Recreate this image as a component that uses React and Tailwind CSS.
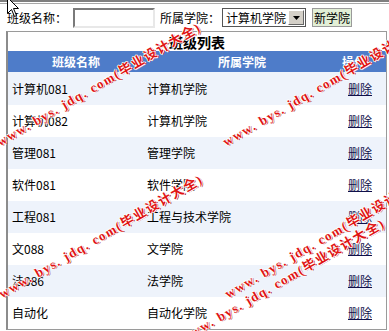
import React from 'react'

const rows = [
  { name: '计算机081', college: '计算机学院' },
  { name: '计算机082', college: '计算机学院' },
  { name: '管理081', college: '管理学院' },
  { name: '软件081', college: '软件学院' },
  { name: '工程081', college: '工程与技术学院' },
  { name: '文088', college: '文学院' },
  { name: '法086', college: '法学院' },
  { name: '自动化', college: '自动化学院' },
]

// watermark start points (bottom-left of the text)
const marks = [
  { x: 2, y: 150 },
  { x: 228, y: 150 },
  { x: 4, y: 302 },
  { x: 230, y: 302 },
  { x: 186, y: 346 },
]

function Watermark({ x, y }) {
  return (
    <div
      className="absolute whitespace-nowrap origin-bottom-left -rotate-30 text-[13px] leading-[16px] font-bold text-[#e01414] font-['Liberation_Serif','Noto_Sans_CJK_SC',serif] tracking-[1.5px] [text-shadow:1px_0_0_#fff,-1px_0_0_#fff,0_1px_0_#fff,0_-1px_0_#fff,1px_1px_0_#8a0000]"
      style={{ left: x, top: y - 16 }}
    >
      www. bys. jdq. com(毕业设计大全)
    </div>
  )
}

function App() {
  return (
    <div className="relative w-[389px] h-[331px] overflow-hidden bg-white text-[12px] text-black font-['Noto_Sans_CJK_SC',sans-serif]">
      {/* top frame */}
      <div className="h-[2px] bg-[#7f7f7f]" />
      <div className="h-[1px] bg-white" />
      <div className="h-[1px] bg-[#a8a8a8]" />

      {/* search bar */}
      <div className="flex items-center h-[27px] pl-[7px]">
        <span className="leading-none">班级名称：</span>
        <div className="ml-[6px] w-[82px] h-[20px] border-2 border-t-[#7a7a7a] border-l-[#7a7a7a] border-b-[#e8e8e8] border-r-[#e8e8e8] bg-white" />
        <span className="ml-[5px] leading-none">所属学院：</span>
        <div className="ml-[2px] w-[84px] h-[19px] flex items-center border border-[#555] bg-white">
          <span className="flex-1 pl-[3px] leading-none whitespace-nowrap">计算机学院</span>
          <div className="w-[16px] h-[15px] mr-[1px] flex items-center justify-center bg-[#d4d0c8] border border-t-white border-l-white border-b-[#666] border-r-[#666]">
            <svg width="7" height="4" viewBox="0 0 7 4">
              <path d="M0 0 H7 L3.5 4 Z" fill="#000" />
            </svg>
          </div>
        </div>
        <button className="ml-[6px] w-[40px] h-[19px] flex items-center justify-center bg-[#e2efd6] border border-[#9a9a9a] text-[12px] leading-none">
          新学院
        </button>
      </div>

      {/* table */}
      <div className="ml-[6px] w-[381px] border border-[#9a9a9a] border-l-2 border-l-[#8c8c8c]">
        <div className="h-[19px] flex items-center justify-center font-bold text-[14px] leading-none">
          班级列表
        </div>
        <div className="grid grid-cols-[136px_196px_1fr] h-[21px] items-center bg-[#4e7cc9] text-white font-bold leading-none">
          <div className="text-center">班级名称</div>
          <div className="text-center">所属学院</div>
          <div className="pl-[2px]">操作</div>
        </div>
        {rows.map((r, i) => (
          <div
            key={i}
            className={`grid grid-cols-[136px_196px_1fr] items-center ${i === 0 ? 'h-[33px]' : 'h-[32px]'} ${i % 2 === 0 ? 'bg-[#eef3fb]' : 'bg-white'}`}
          >
            <div className="pl-[4px]">{r.name}</div>
            <div className="pl-[3px]">{r.college}</div>
            <div className="pl-[8px]">
              <a href="#" className="text-[#10104a] underline">删除</a>
            </div>
          </div>
        ))}
      </div>

      {/* watermarks */}
      {marks.map((m, i) => (
        <Watermark key={i} x={m.x} y={m.y} />
      ))}

      {/* mouse cursor */}
      <svg className="absolute left-[7px] top-[-3px]" width="13" height="21" viewBox="0 0 13 21">
        <path d="M0.5 0.5 L0.5 16.5 L4.5 12.5 L7.5 19.5 L9.5 18.5 L6.5 11.5 L11.5 11.5 Z" fill="#fff" stroke="#000" strokeWidth="1" />
      </svg>
    </div>
  )
}

export default App
